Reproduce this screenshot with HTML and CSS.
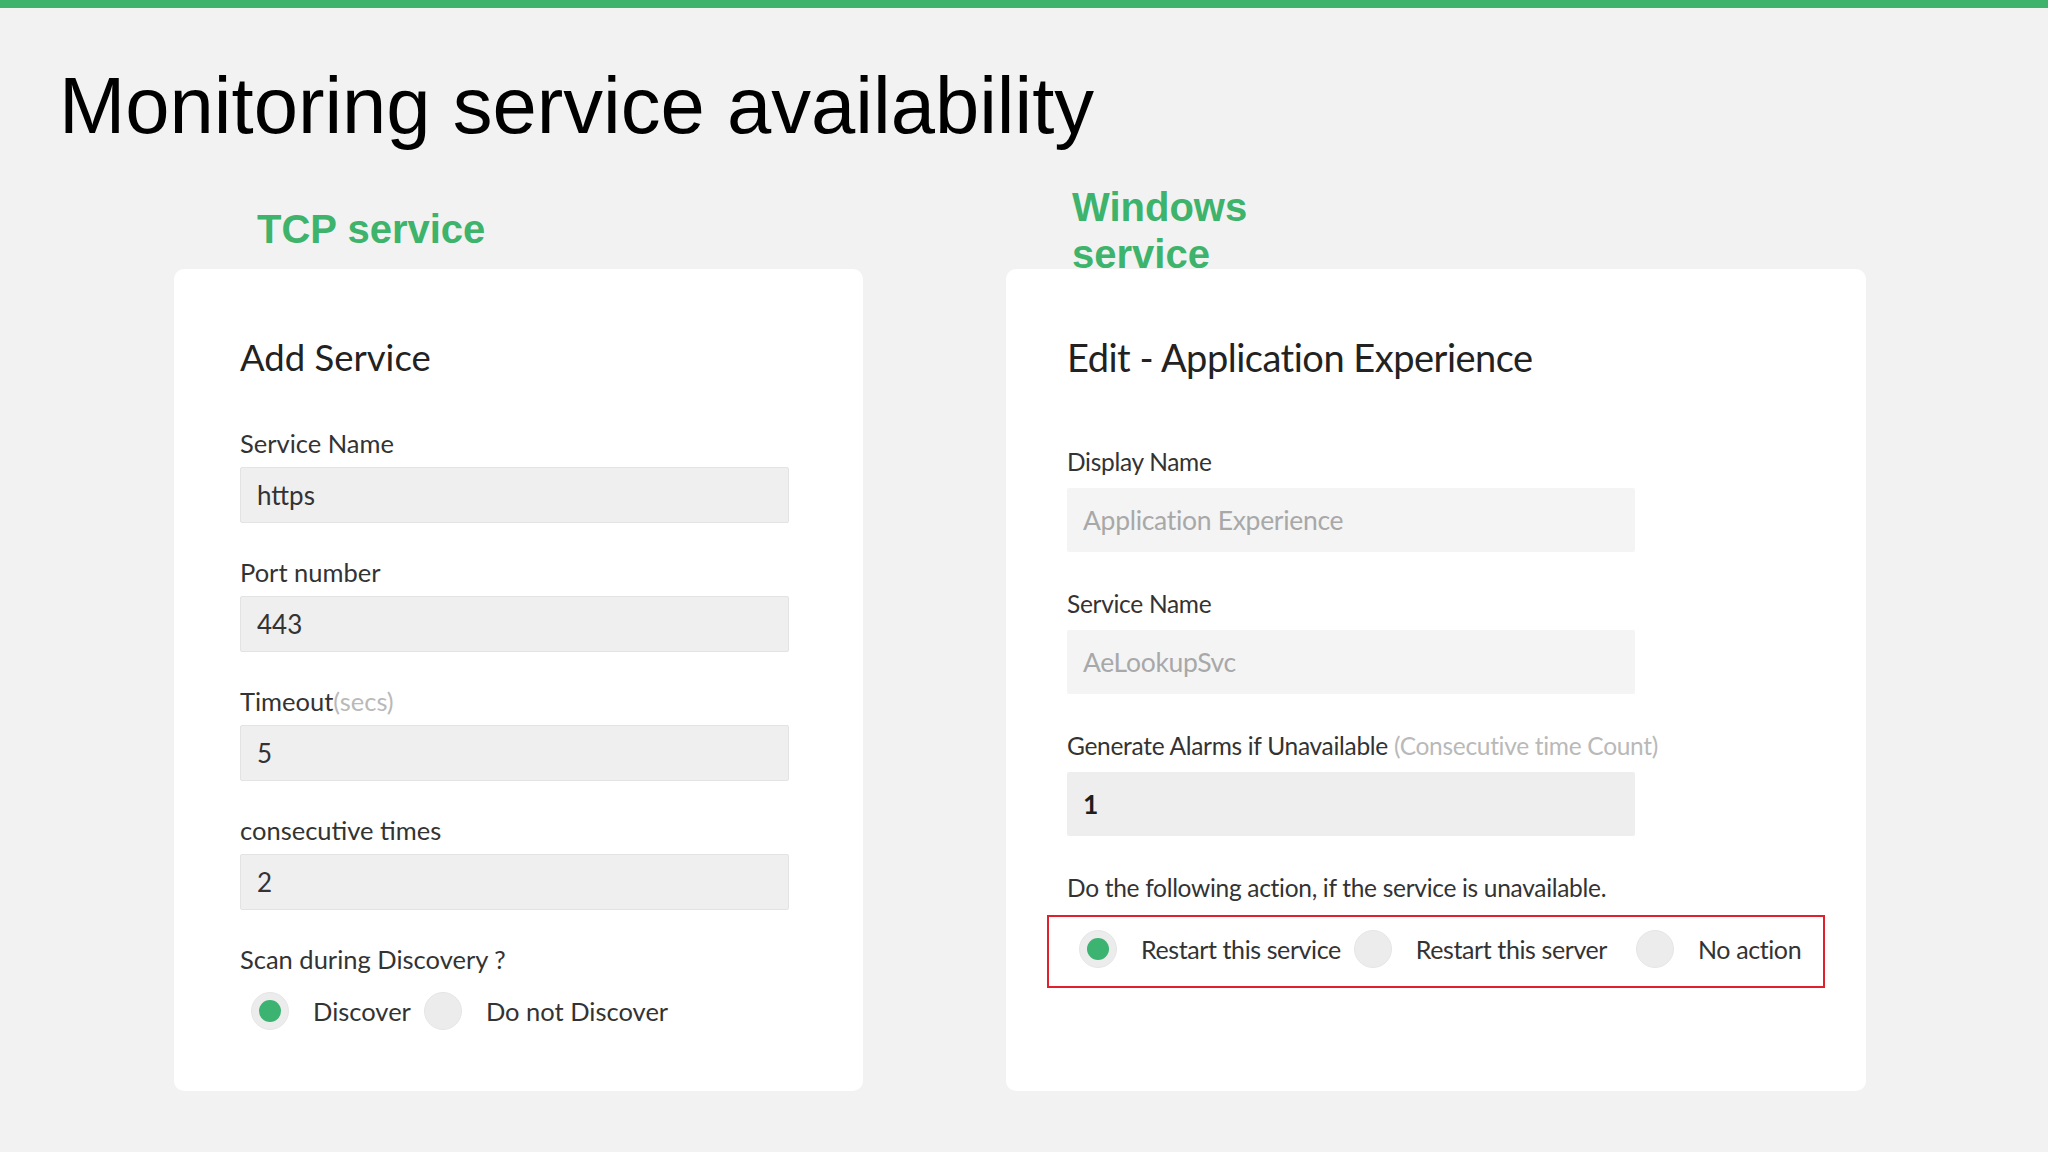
FILE: index.html
```html
<!DOCTYPE html>
<html lang="en">
<head>
<meta charset="utf-8">
<title>Monitoring service availability</title>
<link rel="stylesheet" href="styles.css">
</head>
<body>
<div class="topbar"></div>
<h1 class="page-title">Monitoring service availability</h1>
<main class="columns">
  <h2 class="col-head col-head-tcp">TCP service</h2>
  <h2 class="col-head col-head-win">Windows service</h2>

  <section class="card card-tcp">
    <h3 class="card-title">Add Service</h3>
    <div class="field">
      <label class="label">Service Name</label>
      <div class="input">https</div>
    </div>
    <div class="field">
      <label class="label">Port number</label>
      <div class="input">443</div>
    </div>
    <div class="field">
      <label class="label">Timeout<span class="hint">(secs)</span></label>
      <div class="input">5</div>
    </div>
    <div class="field">
      <label class="label">consecutive times</label>
      <div class="input">2</div>
    </div>
    <div class="field field-last">
      <label class="label">Scan during Discovery ?</label>
      <div class="radios">
        <span class="radio checked"></span><span class="radio-text">Discover</span>
        <span class="radio"></span><span class="radio-text">Do not Discover</span>
      </div>
    </div>
  </section>

  <section class="card card-win">
    <h3 class="card-title">Edit - Application Experience</h3>
    <div class="field">
      <label class="label">Display Name</label>
      <div class="input input-disabled">Application Experience</div>
    </div>
    <div class="field">
      <label class="label">Service Name</label>
      <div class="input input-disabled">AeLookupSvc</div>
    </div>
    <div class="field">
      <label class="label">Generate Alarms if Unavailable <span class="hint">(Consecutive time Count)</span></label>
      <div class="input input-value">1</div>
    </div>
    <div class="field field-last">
      <label class="label">Do the following action, if the service is unavailable.</label>
      <div class="radios radios-boxed">
        <span class="radio checked"></span><span class="radio-text">Restart this service</span>
        <span class="radio"></span><span class="radio-text radio-text-wide">Restart this server</span>
        <span class="radio"></span><span class="radio-text">No action</span>
      </div>
    </div>
  </section>
</main>
</body>
</html>
```
FILE: styles.css
```css
html, body {
  margin: 0;
  padding: 0;
}
body {
  width: 2048px;
  height: 1152px;
  background: #f2f2f2;
  font-family: Lato, "Open Sans", "Liberation Sans", sans-serif;
  color: #333333;
  overflow: hidden;
}
.topbar {
  height: 8px;
  background: #3db36b;
}
.page-title {
  margin: 58px 0 0 59px;
  font-family: "Liberation Sans", Arial, sans-serif;
  font-weight: 400;
  font-size: 79.6px;
  line-height: 80px;
  color: #000000;
}
.columns {
  display: grid;
  grid-template-columns: 689px 860px;
  grid-template-rows: auto auto;
  column-gap: 143px;
  margin: 38px 0 0 174px;
}
.col-head {
  margin: 0;
  font-family: "Liberation Sans", Arial, sans-serif;
  font-weight: 700;
  font-size: 40px;
  line-height: 47px;
  color: #3db36b;
  align-self: end;
}
.col-head-tcp {
  padding-left: 83px;
  margin-bottom: 16px;
}
.col-head-win {
  padding-left: 66px;
  width: 180px;
  margin-bottom: -9px;
  position: relative;
  z-index: 1;
}
.card {
  background: #ffffff;
  border-radius: 10px;
  padding-top: 66px;
  padding-bottom: 61px;
}
.card-tcp {
  padding-left: 66px;
}
.card-win {
  padding-left: 61px;
}
.card-title {
  margin: 0;
  font-weight: 400;
  font-size: 36.5px;
  line-height: 44px;
  color: #222222;
}
.label {
  display: block;
  font-size: 25.5px;
  line-height: 30px;
  color: #333333;
}
.hint {
  color: #b9b9b9;
}
.input {
  box-sizing: border-box;
  display: flex;
  align-items: center;
  padding-left: 16px;
  font-size: 26px;
  color: #333333;
  background: #efefef;
  border: 1px solid #e3e3e3;
  border-radius: 2px;
}

/* TCP card */
.card-tcp .field {
  margin-top: 34px;
}
.card-tcp .card-title + .field {
  margin-top: 49px;
}
.card-tcp .label {
  margin-bottom: 9px;
}
.card-tcp .input {
  width: 549px;
  height: 56px;
}
.card-tcp .radios {
  margin-top: 18px;
  padding-left: 11px;
}

/* Windows card */
.card-win .card-title {
  font-size: 38px;
  letter-spacing: -0.5px;
}
.card-win .field {
  margin-top: 37px;
}
.card-win .card-title + .field {
  margin-top: 68px;
}
.card-win .label {
  font-size: 24.5px;
  letter-spacing: -0.3px;
  margin-bottom: 11px;
}
.card-win .input {
  width: 568px;
  height: 64px;
  border: none;
  background: #f4f4f4;
  font-size: 26.5px;
  letter-spacing: -0.3px;
}
.input-disabled {
  color: #a8a8a8;
}
.card-win .input-value {
  background: #eeeeee;
  color: #1e1e1e;
  font-weight: 700;
}

/* radios */
.radios {
  display: flex;
  align-items: center;
}
.radio {
  box-sizing: border-box;
  width: 38px;
  height: 38px;
  border-radius: 50%;
  background: #ececec;
  border: 1px solid #e6e6e6;
  flex: none;
  display: flex;
  align-items: center;
  justify-content: center;
}
.radio.checked::after {
  content: "";
  width: 22px;
  height: 22px;
  border-radius: 50%;
  background: #3cb371;
}
.radio-text {
  font-size: 25.5px;
  color: #333333;
  margin-left: 24px;
  margin-right: 13px;
}
.radios-boxed {
  box-sizing: border-box;
  margin-top: 12px;
  margin-left: -20px;
  width: 778px;
  height: 73px;
  padding-left: 30px;
  padding-bottom: 6px;
  border: 2px solid #e0202a;
}
.radios-boxed .radio-text {
  font-size: 25px;
  letter-spacing: -0.4px;
}
.radios-boxed .radio-text-wide {
  margin-right: 29px;
}
```
